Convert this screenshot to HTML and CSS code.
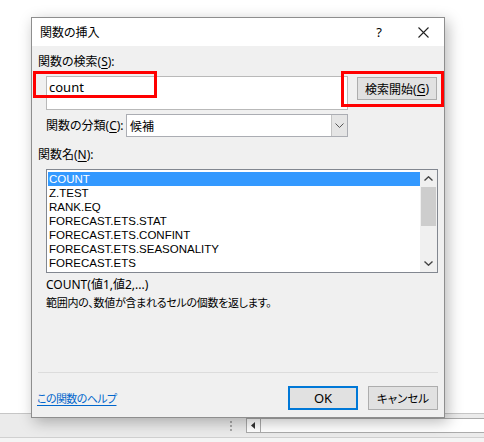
FILE: index.html
```html
<!DOCTYPE html>
<html lang="ja">
<head>
<meta charset="utf-8">
<title>関数の挿入</title>
<link rel="stylesheet" href="styles.css">
</head>
<body>
<div class="app">
  <div class="sheet"></div>
  <div class="statusbar">
    <div class="grip"><span></span><span></span><span></span></div>
    <div class="scroll-left">
      <svg width="5" height="7" viewBox="0 0 5 7"><polygon points="4,0 4,7 0,3.5" fill="#333"/></svg>
    </div>
    <div class="scroll-track"></div>
  </div>
  <div class="lower"></div>
</div>

<div class="dialog">
  <div class="titlebar">
    <span class="title">関数の挿入</span>
    <span class="help-q">?</span>
    <svg class="close-x" width="11" height="11" viewBox="0 0 11 11"><path d="M0.5 0.5 L10.5 10.5 M10.5 0.5 L0.5 10.5" stroke="#222" stroke-width="1.1" fill="none"/></svg>
  </div>
  <div class="content">
    <div class="label">関数の検索(<u>S</u>):</div>
    <div class="search-row">
      <div class="search-box">count</div>
      <div class="btn btn-search">検索開始(<u>G</u>)</div>
    </div>
    <div class="category-row">
      <div class="cat-label">関数の分類(<u>C</u>):</div>
      <div class="select">
        <span class="select-value">候補</span>
        <span class="select-arrow">
          <svg width="9" height="5" viewBox="0 0 9 5"><polyline points="0.5,0.5 4.5,4.5 8.5,0.5" stroke="#555" stroke-width="1" fill="none"/></svg>
        </span>
      </div>
    </div>
    <div class="label label-names">関数名(<u>N</u>):</div>
    <div class="listbox">
      <div class="items">
        <div class="item selected">COUNT</div>
        <div class="item">Z.TEST</div>
        <div class="item">RANK.EQ</div>
        <div class="item">FORECAST.ETS.STAT</div>
        <div class="item">FORECAST.ETS.CONFINT</div>
        <div class="item">FORECAST.ETS.SEASONALITY</div>
        <div class="item">FORECAST.ETS</div>
      </div>
      <div class="vscroll">
        <div class="arrow">
          <svg width="9" height="5" viewBox="0 0 9 5"><polyline points="0.5,4.5 4.5,0.8 8.5,4.5" stroke="#444" stroke-width="1.4" fill="none"/></svg>
        </div>
        <div class="thumb"></div>
        <div class="track-rest"></div>
        <div class="arrow">
          <svg width="9" height="5" viewBox="0 0 9 5"><polyline points="0.5,0.5 4.5,4.2 8.5,0.5" stroke="#444" stroke-width="1.4" fill="none"/></svg>
        </div>
      </div>
    </div>
    <div class="syntax">COUNT(値1,値2,...)</div>
    <div class="desc">範囲内の、数値が含まれるセルの個数を返します。</div>
    <div class="footer">
      <a class="help-link" href="#">この関数のヘルプ</a>
      <div class="btn btn-ok">OK</div>
      <div class="btn btn-cancel">キャンセル</div>
    </div>
  </div>
  <div class="mark mark-search"></div>
  <div class="mark mark-button"></div>
</div>
</body>
</html>
```
FILE: styles.css
```css
* { box-sizing: border-box; }
html, body {
  margin: 0;
  padding: 0;
  background: #ffffff;
  width: 484px;
  height: 442px;
  overflow: hidden;
  font-family: "Noto Sans", "Noto Sans CJK JP", sans-serif;
  font-size: 12px;
  color: #000;
  font-feature-settings: "palt";
}

.app { width: 484px; }
.sheet { height: 413px; background: #ffffff; }
.statusbar {
  height: 25px;
  border-top: 1px solid #c6c6c6;
  border-bottom: 1px solid #d0d0d0;
  background: #ebebeb;
  display: flex;
  align-items: center;
  padding-left: 230px;
}
.grip { display: flex; flex-direction: column; gap: 2px; width: 2px; }
.grip span { width: 2px; height: 2px; background: #a8a8a8; display: block; }
.scroll-left {
  margin-left: 14px;
  width: 15px;
  height: 15px;
  border: 1px solid #ababab;
  background: #fff;
  display: flex;
  align-items: center;
  justify-content: center;
}
.scroll-track {
  flex: 1;
  height: 15px;
  background: #fff;
  border-top: 1px solid #ababab;
  border-bottom: 1px solid #ababab;
}
.lower { height: 4px; background: #f4f4f4; }

.dialog {
  position: absolute;
  left: 31px;
  top: 17px;
  width: 414px;
  height: 401px;
  border: 1px solid #8e8e8e;
  background: #f0f0f0;
  display: flex;
  flex-direction: column;
  box-shadow: 3px 4px 14px rgba(0, 0, 0, 0.28);
}

.titlebar {
  height: 28px;
  background: #ffffff;
  display: flex;
  align-items: center;
  padding-left: 8px;
  flex-shrink: 0;
}
.title { flex: 1; font-size: 12px; }
.help-q {
  font-family: "Noto Sans", sans-serif;
  font-size: 13px;
  margin-right: 36px;
}
.close-x { margin-right: 15px; }

.content {
  flex: 1;
  display: flex;
  flex-direction: column;
  padding: 8px 6px 0 6px;
}
.label { line-height: 16px; height: 16px; }
.label u, .cat-label u, .btn u { text-underline-offset: 2px; }

.search-row {
  display: flex;
  align-items: flex-start;
  margin-top: 6px;
  padding-left: 8px;
}
.search-box {
  width: 302px;
  height: 34px;
  background: #fff;
  border: 1px solid #b9b9b9;
  padding: 2px 0 0 2px;
  font-size: 13px;
  line-height: 16px;
}
.btn {
  height: 24px;
  background: #e1e1e1;
  border: 1px solid #adadad;
  display: flex;
  align-items: center;
  justify-content: center;
  font-size: 12px;
}
.btn-search { width: 80px; height: 23px; margin-left: 9px; margin-top: 1px; }

.category-row {
  display: flex;
  align-items: center;
  margin-top: 4px;
  padding-left: 8px;
  height: 23px;
}
.cat-label { width: 80px; line-height: 16px; }
.select {
  width: 222px;
  height: 23px;
  background: #fff;
  border: 1px solid #abadb3;
  display: flex;
  align-items: center;
}
.select-value { flex: 1; padding-left: 3px; }
.select-arrow {
  width: 16px;
  height: 21px;
  background: #e5e5e5;
  border-left: 1px solid #c4c4c4;
  display: flex;
  align-items: center;
  justify-content: center;
}

.label-names { margin-top: 10px; }

.listbox {
  margin-top: 6px;
  margin-left: 8px;
  width: 392px;
  height: 104px;
  border: 1px solid #828790;
  background: #fff;
  display: flex;
}
.items { flex: 1; padding: 2px 0 0 1px; }
.item {
  height: 14px;
  line-height: 14px;
  font-family: "Liberation Sans", Arial, sans-serif;
  font-size: 11.5px;
  padding-left: 1px;
  white-space: nowrap;
}
.item.selected { background: #3399ff; color: #fff; }
.vscroll {
  width: 17px;
  background: #f0f0f0;
  display: flex;
  flex-direction: column;
  align-items: center;
}
.arrow {
  width: 17px;
  height: 17px;
  display: flex;
  align-items: center;
  justify-content: center;
}
.thumb { width: 15px; height: 39px; background: #cdcdcd; }
.track-rest { flex: 1; }

.syntax {
  margin-top: 4px;
  padding-left: 8px;
  line-height: 16px;
  font-size: 12px;
}
.desc {
  margin-top: 2px;
  padding-left: 8px;
  line-height: 16px;
  font-size: 11px;
  letter-spacing: -0.3px;
}

.footer {
  margin-top: auto;
  border-top: 1px solid #dcdcdc;
  padding: 13px 0 7px 0;
  display: flex;
  align-items: center;
}
.help-link {
  flex: 1;
  color: #0066cc;
  text-decoration: underline;
  text-underline-offset: 2px;
  margin-left: -1px;
  font-size: 11px;
  letter-spacing: -0.6px;
}
.btn-ok {
  width: 70px;
  border: 2px solid #0078d7;
  font-family: "Noto Sans", sans-serif;
  font-size: 13px;
}
.btn-cancel { width: 70px; margin-left: 10px; font-size: 11.5px; }

.mark {
  position: absolute;
  border: 3px solid #ff0000;
}
.mark-search { left: 1px; top: 53px; width: 124px; height: 27px; }
.mark-button { left: 309px; top: 53px; width: 103px; height: 36px; }
```
